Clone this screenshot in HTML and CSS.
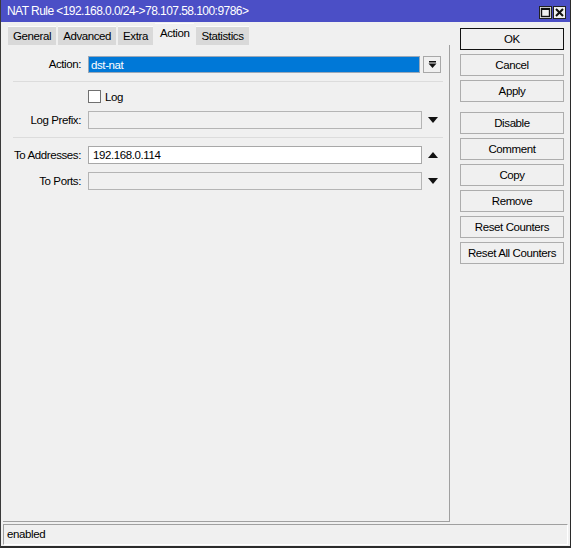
FILE: index.html
```html
<!DOCTYPE html>
<html lang="en">
<head>
  <meta charset="UTF-8">
  <title>NAT Rule</title>
  <link rel="stylesheet" href="styles.css">
</head>
<body>
  <div id="window">
    <div id="title-bar">
      <span class="title">NAT Rule &lt;192.168.0.0/24-&gt;78.107.58.100:9786&gt;</span>
      <div class="title-buttons">
        <span class="tbtn">
          <svg width="11" height="11" viewBox="0 0 11 11"><rect x="1.5" y="1.5" width="8" height="8" fill="none" stroke="#111" stroke-width="1.4"/><line x1="1" y1="2.2" x2="10" y2="2.2" stroke="#111" stroke-width="1.6"/></svg>
        </span>
        <span class="tbtn">
          <svg width="11" height="11" viewBox="0 0 11 11"><path d="M2 2 L9 9 M9 2 L2 9" stroke="#111" stroke-width="2"/></svg>
        </span>
      </div>
    </div>

    <div id="content">
      <div id="main">
        <div id="tabs">
          <span class="tab">General</span>
          <span class="tab">Advanced</span>
          <span class="tab">Extra</span>
          <span class="tab active">Action</span>
          <span class="tab">Statistics</span>
        </div>

        <div id="panel">
          <div class="row first">
            <span class="label">Action:</span>
            <span class="field selected">dst-nat</span>
            <span class="drop-btn">
              <svg width="9" height="9" viewBox="0 0 9 9"><rect x="1" y="1" width="7" height="1.5" fill="#111"/><path d="M0.5 3.5 H8.5 L4.5 8 Z" fill="#111"/></svg>
            </span>
          </div>

          <div class="separator"></div>

          <div class="row check-row">
            <span class="label"></span>
            <span class="checkbox"></span>
            <span class="check-label">Log</span>
          </div>

          <div class="row">
            <span class="label">Log Prefix:</span>
            <span class="field"></span>
            <span class="arrow down"></span>
          </div>

          <div class="separator"></div>

          <div class="row">
            <span class="label">To Addresses:</span>
            <span class="field white">192.168.0.114</span>
            <span class="arrow up"></span>
          </div>

          <div class="row">
            <span class="label">To Ports:</span>
            <span class="field"></span>
            <span class="arrow down"></span>
          </div>
        </div>
      </div>

      <div id="actions">
        <button class="btn default">OK</button>
        <button class="btn">Cancel</button>
        <button class="btn">Apply</button>
        <button class="btn spaced">Disable</button>
        <button class="btn">Comment</button>
        <button class="btn">Copy</button>
        <button class="btn">Remove</button>
        <button class="btn">Reset Counters</button>
        <button class="btn">Reset All Counters</button>
      </div>
    </div>

    <div id="status-bar">enabled</div>
  </div>
</body>
</html>
```

FILE: styles.css
```css
* {
  box-sizing: border-box;
}
body {
  margin: 0;
  background: #ffffff;
  font-family: 'Liberation Sans', Arial, sans-serif;
  font-size: 11.5px;
  letter-spacing: -0.4px;
  color: #000;
}
#window {
  width: 571px;
  height: 548px;
  background: #f0f0f0;
  border-left: 1px solid #3a3a3a;
  border-right: 1px solid #2b2b2b;
  border-bottom: 2px solid #2b2b2b;
  display: flex;
  flex-direction: column;
}
#title-bar {
  height: 22px;
  background: #4b4fc6;
  color: #fff;
  display: flex;
  align-items: center;
  justify-content: space-between;
  padding: 0 4px 0 6px;
  font-size: 12px;
  letter-spacing: -0.55px;
}
.title-buttons {
  display: flex;
  gap: 1px;
  margin-top: 3px;
}
.tbtn {
  width: 13px;
  height: 13px;
  background: #f0f0f0;
  border: 1px solid #222;
  display: flex;
  align-items: center;
  justify-content: center;
}
#content {
  flex: 1;
  display: flex;
  padding-left: 2px;
}
#main {
  width: 447px;
  display: flex;
  flex-direction: column;
}
#tabs {
  height: 23px;
  display: flex;
  align-items: flex-end;
  gap: 2px;
  padding-left: 5px;
}
.tab {
  height: 19px;
  padding: 0 5px;
  background: #d9d9d9;
  display: flex;
  align-items: center;
  border-top: 1px solid #fbfbfb;
}
.tab.active {
  height: 22px;
  background: #f0f0f0;
  padding-bottom: 3px;
}
#panel {
  flex: 1;
  border-right: 1px solid #a0a0a0;
  border-bottom: 1px solid #a0a0a0;
  padding-top: 10px;
}
.row {
  display: flex;
  align-items: center;
  height: 18px;
  margin-bottom: 8px;
}
.label {
  width: 78px;
  margin-right: 7px;
  text-align: right;
}
.field {
  width: 334px;
  height: 18px;
  border: 1px solid #b4b4b4;
  background: #f0f0f0;
  padding: 0 4px;
  line-height: 16px;
}
.field.white {
  background: #fff;
  border-color: #a8a8a8;
}
.field.selected {
  width: 332px;
  height: 17px;
  background: #0078d7;
  color: #fff;
  border-color: #9aa8b8;
  padding-left: 2px;
}
.drop-btn {
  width: 18px;
  height: 17px;
  margin-left: 3px;
  border: 1px solid #a8a8a8;
  background: #f0f0f0;
  display: flex;
  align-items: center;
  justify-content: center;
}
.arrow {
  width: 19px;
  display: flex;
  justify-content: center;
  padding-left: 2px;
}
.arrow::before {
  content: "";
  border-left: 5px solid transparent;
  border-right: 5px solid transparent;
}
.arrow.down::before {
  border-top: 6px solid #111;
}
.arrow.up::before {
  border-bottom: 6px solid #111;
}
.separator {
  height: 1px;
  background: #dcdcdc;
  margin: 1px 6px 8px 10px;
}
.check-row {
  height: 13px;
  margin-top: 0;
  margin-bottom: 8px;
}
.checkbox {
  width: 13px;
  height: 13px;
  background: #fff;
  border: 1px solid #707070;
}
.check-label {
  margin-left: 4px;
}
#actions {
  display: flex;
  flex-direction: column;
  gap: 4px;
  padding: 6px 0 0 10px;
}
.btn {
  width: 104px;
  height: 22px;
  background: #f0f0f0;
  border: 1px solid #adadad;
  font-family: inherit;
  font-size: 11.5px;
  letter-spacing: -0.4px;
  color: #000;
  padding: 0;
}
.btn.default {
  border: 1px solid #111;
}
.btn.spaced {
  margin-top: 6px;
}
#status-bar {
  height: 21px;
  margin: 2px 2px 1px 2px;
  border-top: 1px solid #a0a0a0;
  border-left: 1px solid #a0a0a0;
  border-right: 1px solid #fff;
  border-bottom: 1px solid #fff;
  padding: 2px 3px;
  line-height: 15px;
}
```
